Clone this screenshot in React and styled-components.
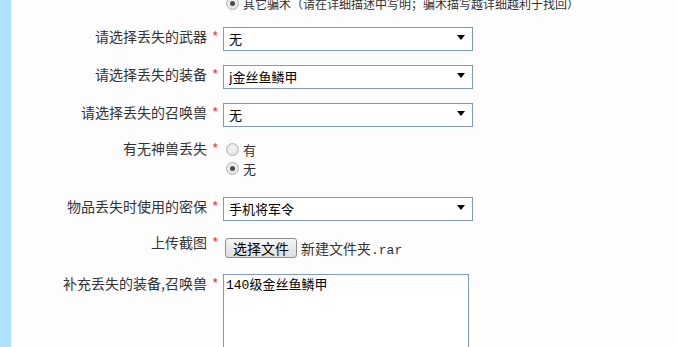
import React from 'react';
import styled, { createGlobalStyle } from 'styled-components';

const GlobalStyle = createGlobalStyle`
  html, body {
    margin: 0;
    padding: 0;
    background: #fdfdfd;
    overflow: hidden;
  }
`;

const Page = styled.div`
  height: 347px;
  border-left: 11px solid #ade3fe;
  background: #fdfdfd;
  font-family: 'Noto Sans CJK SC', 'Microsoft YaHei', sans-serif;
  color: #333;
  overflow: hidden;
`;

const Form = styled.div`
  margin-top: -9px;
  display: grid;
  grid-template-columns: 196px 16px 1fr;
  row-gap: 14px;
  align-items: start;
`;

const Label = styled.div`
  font-size: 14px;
  line-height: 18px;
  text-align: right;
  white-space: nowrap;
  padding-top: ${({ top }) => top || 0}px;
`;

const Star = styled.span`
  color: #f33;
  font-size: 14px;
  line-height: 18px;
  padding-left: 5px;
  padding-top: ${({ top }) => top || 0}px;
`;

const Field = styled.div`
  display: flex;
  flex-direction: ${({ column }) => (column ? 'column' : 'row')};
  align-items: ${({ column }) => (column ? 'flex-start' : 'center')};
  gap: ${({ gap }) => gap || 0}px;
  padding-top: ${({ top }) => top || 0}px;
  padding-bottom: ${({ bottom }) => bottom || 0}px;
`;

const SelectWrap = styled.div`
  position: relative;
  width: 250px;
  height: 24px;

  &::after {
    content: '';
    position: absolute;
    right: 8px;
    top: 10px;
    border-left: 4px solid transparent;
    border-right: 4px solid transparent;
    border-top: 5px solid #000;
    pointer-events: none;
  }
`;

const Select = styled.select`
  appearance: none;
  box-sizing: border-box;
  width: 100%;
  height: 100%;
  margin: 0;
  padding: 0 0 0 5px;
  border: 1px solid #7f9db9;
  border-radius: 0;
  background: #fff;
  font-family: 'Noto Sans CJK SC', sans-serif;
  font-size: 13px;
  color: #000;
  outline: none;
`;

const RadioItem = styled.label`
  box-sizing: border-box;
  display: flex;
  align-items: center;
  height: ${({ h }) => h || 19}px;
  padding-top: ${({ top }) => top || 0}px;
  font-size: ${({ size }) => size || 13}px;
  color: #333;
  white-space: nowrap;
`;

const Radio = styled.input.attrs({ type: 'radio' })`
  appearance: none;
  box-sizing: border-box;
  width: 13px;
  height: 13px;
  margin: 0 4px 0 3px;
  border: 1px solid #b4b4b4;
  border-radius: 50%;
  background: radial-gradient(circle at 50% 40%, #f4f4f4 0%, #dcdcdc 100%);
  position: relative;

  &:checked::after {
    content: '';
    position: absolute;
    left: 3px;
    top: 3px;
    width: 5px;
    height: 5px;
    border-radius: 50%;
    background: #4a4a4a;
  }
`;

const FileButton = styled.button`
  box-sizing: border-box;
  height: 20px;
  width: 72px;
  margin: 0 0 0 2px;
  padding: 0;
  border: 1px solid #8e8e8e;
  border-radius: 3px;
  background: linear-gradient(#f6f6f6, #dddddd);
  font-family: 'Noto Sans CJK SC', sans-serif;
  font-size: 14px;
  line-height: 18px;
  color: #000;
`;

const FileName = styled.span`
  font-family: 'Noto Sans CJK SC', sans-serif;
  font-size: 14px;
  color: #333;

  em {
    font-style: normal;
    font-family: 'Liberation Mono', monospace;
    font-size: 13px;
  }
`;

const TextArea = styled.textarea`
  box-sizing: border-box;
  width: 246px;
  height: 100px;
  margin: 0;
  padding: 3px 2px;
  border: 1px solid #7f9db9;
  border-radius: 0;
  background: #fff;
  resize: none;
  font-family: 'Liberation Mono', 'Noto Sans CJK SC', monospace;
  font-size: 13px;
  line-height: 16px;
  color: #000;
  outline: none;
`;

const SelectField = ({ value }) => (
  <SelectWrap>
    <Select defaultValue={value}>
      <option value={value}>{value}</option>
    </Select>
  </SelectWrap>
);

const App = () => (
  <Page>
    <GlobalStyle />
    <Form>
      <span />
      <span />
      <Field>
        <RadioItem size={12} h={20} top={4}>
          <Radio name="way" defaultChecked />
          其它骗术（请在详细描述中写明；骗术描写越详细越利于找回）
        </RadioItem>
      </Field>

      <Label top={2}>请选择丢失的武器</Label>
      <Star top={2}>*</Star>
      <SelectField value="无" />

      <Label top={2}>请选择丢失的装备</Label>
      <Star top={2}>*</Star>
      <SelectField value="j金丝鱼鳞甲" />

      <Label top={2}>请选择丢失的召唤兽</Label>
      <Star top={2}>*</Star>
      <SelectField value="无" />

      <Label>有无神兽丢失</Label>
      <Star>*</Star>
      <Field column top={1} bottom={3}>
        <RadioItem>
          <Radio name="beast" />有
        </RadioItem>
        <RadioItem>
          <Radio name="beast" defaultChecked />无
        </RadioItem>
      </Field>

      <Label top={2}>物品丢失时使用的密保</Label>
      <Star top={2}>*</Star>
      <SelectField value="手机将军令" />

      <Label>上传截图</Label>
      <Star>*</Star>
      <Field gap={4} top={5} bottom={2}>
        <FileButton type="button">选择文件</FileButton>
        <FileName>
          新建文件夹<em>.rar</em>
        </FileName>
      </Field>

      <Label>补充丢失的装备,召唤兽</Label>
      <Star>*</Star>
      <TextArea defaultValue="140级金丝鱼鳞甲" />
    </Form>
  </Page>
);

export default App;
